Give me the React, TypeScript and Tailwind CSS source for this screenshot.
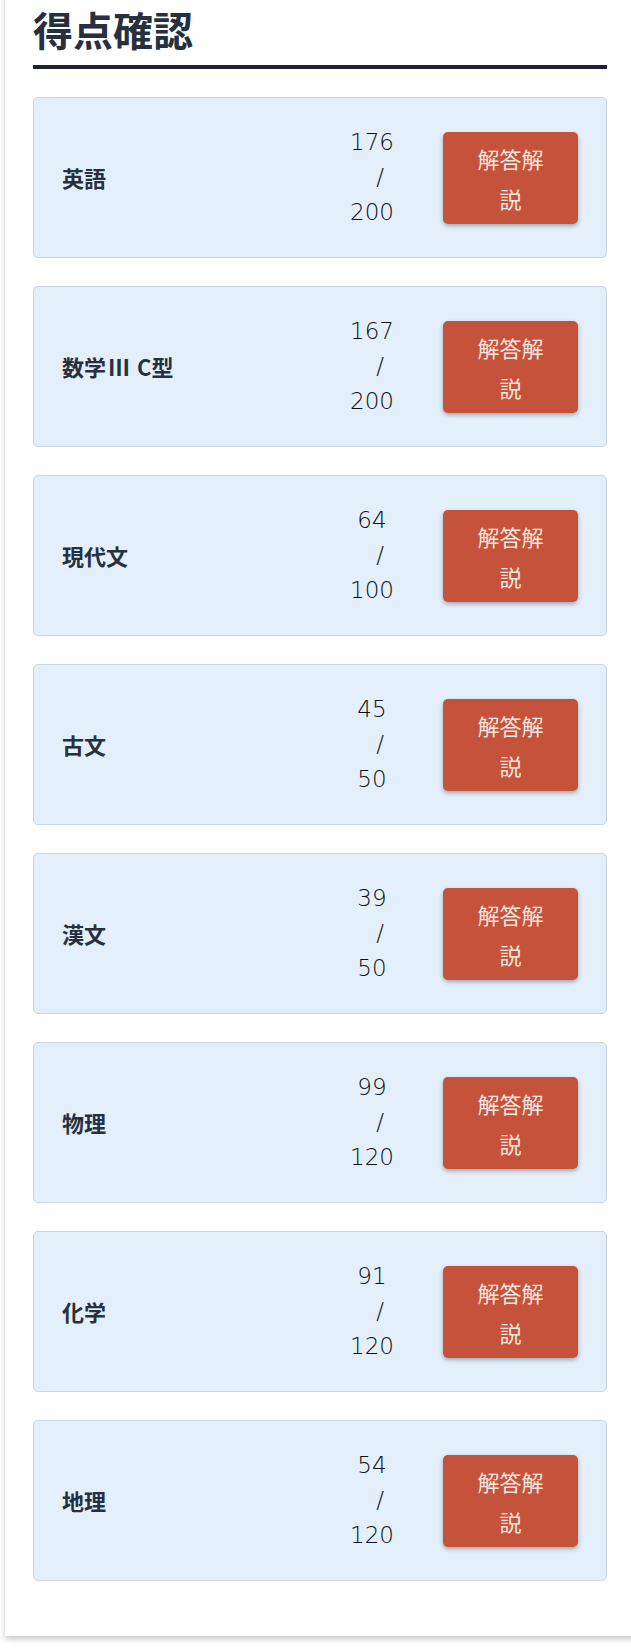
const scores = [
  { subject: '英語', score: 176, max: 200 },
  { subject: '数学ⅢC型', score: 167, max: 200 },
  { subject: '現代文', score: 64, max: 100 },
  { subject: '古文', score: 45, max: 50 },
  { subject: '漢文', score: 39, max: 50 },
  { subject: '物理', score: 99, max: 120 },
  { subject: '化学', score: 91, max: 120 },
  { subject: '地理', score: 54, max: 120 },
]

const cjk = "font-['Noto_Sans_CJK_JP',sans-serif]"

function Subject({ name }: { name: string }) {
  // Ⅲ sits a little apart from the following letter in the reference
  const parts = name.split('Ⅲ')
  if (parts.length === 1) return <>{name}</>
  return (
    <>
      {parts[0]}
      <span className="ml-[2px] mr-[4px] tracking-[3px]">Ⅲ</span>
      {parts[1]}
    </>
  )
}

function ScoreCard({ subject, score, max }: { subject: string; score: number; max: number }) {
  return (
    <div className="flex h-[161px] items-center rounded-[5px] border border-[#c9d6e3] bg-[#e3effa] px-[28px]">
      <div className={`flex-1 text-[22px] font-bold text-[#27303f] ${cjk}`}>
        <Subject name={subject} />
      </div>
      <div className="mr-[31px] w-[80px] text-center font-['DejaVu_Sans',sans-serif] text-[23px] font-extralight leading-[35px] text-[#0e1114]">
        <div>{score}</div>
        <div className="pl-4">/</div>
        <div>{max}</div>
      </div>
      <button
        className={`h-[92px] w-[135px] rounded-[5px] bg-[#c5533c] px-[28px] text-[22px] leading-[40px] text-[#fde6de] shadow-[0_2px_4px_rgba(0,0,0,0.3)] ${cjk}`}
      >
        解答解説
      </button>
    </div>
  )
}

export default function App() {
  return (
    <div className="min-h-[1649px] overflow-hidden bg-white">
      <div className="ml-[5px] -mt-[20px] w-[660px] bg-white pb-[55px] pl-[28px] pr-[58px] pt-[25px] shadow-[0_3px_6px_rgba(0,0,0,0.22)]">
        <h2
          className={`border-b-4 border-[#1b2238] pb-[12px] text-[40px] font-bold leading-[48px] text-[#27303f] ${cjk}`}
        >
          得点確認
        </h2>
        <div className="mt-[28px] space-y-[28px]">
          {scores.map((s) => (
            <ScoreCard key={s.subject} {...s} />
          ))}
        </div>
      </div>
    </div>
  )
}
